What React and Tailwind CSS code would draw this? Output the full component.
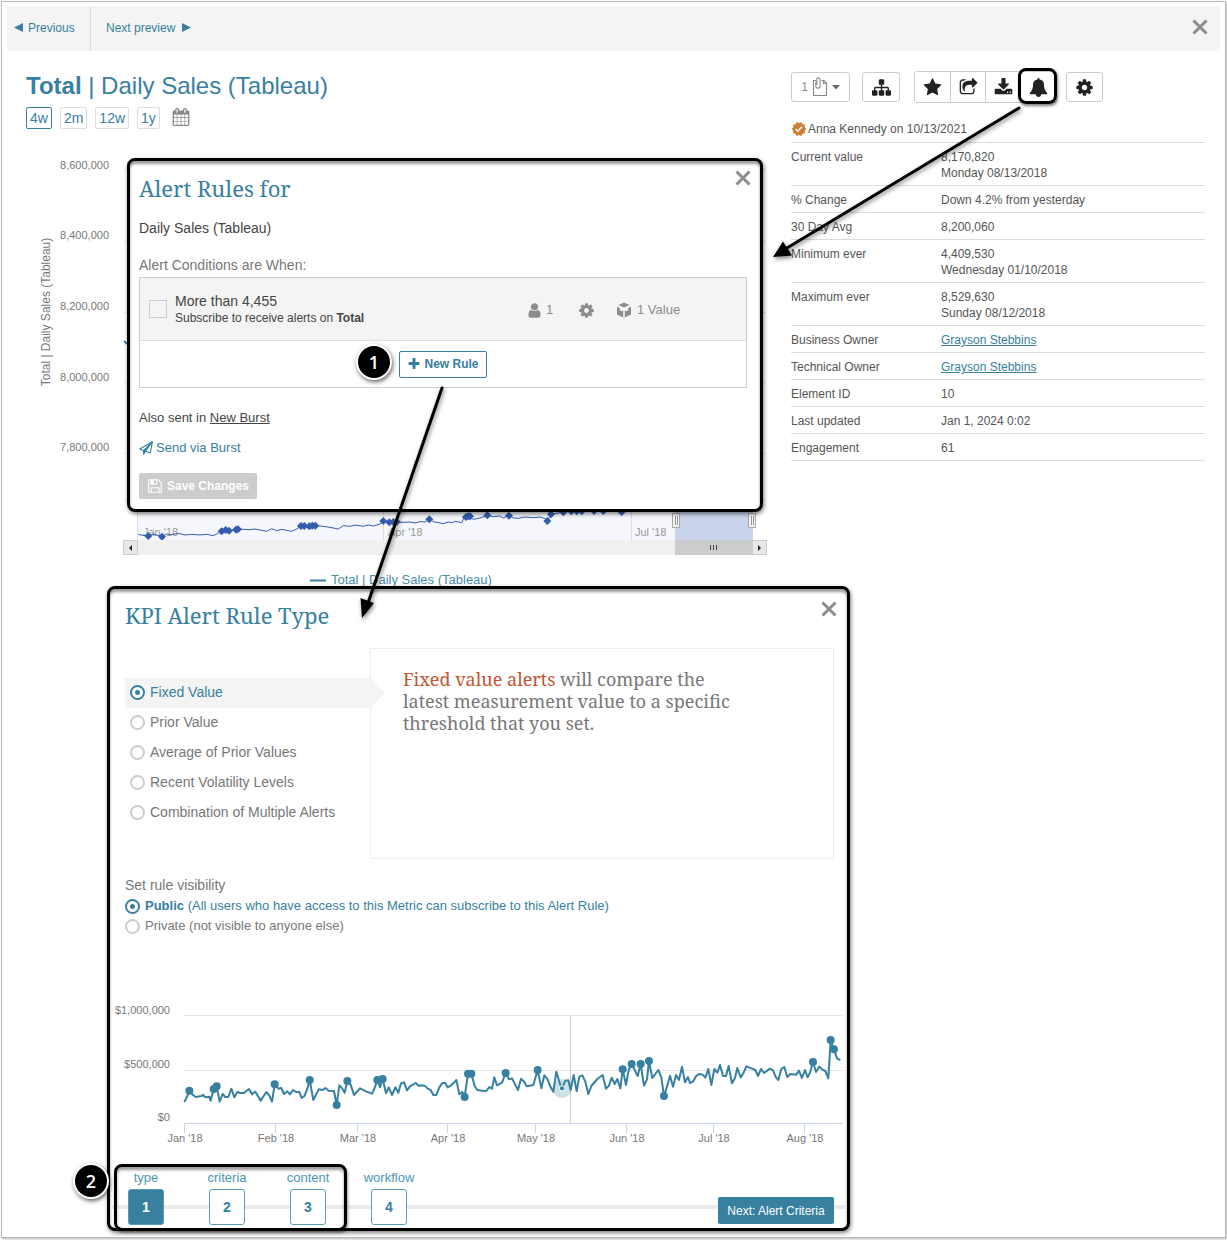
import { useState } from "react"
import { MdVerified } from "react-icons/md"

const SERIF = "font-['Noto_Serif','Droid_Serif','DejaVu_Serif',serif]"

const ICONS = {
    calendar: "M192 1664h288v-288h-288v288zm352 0h320v-288h-320v288zm-352-352h288v-320h-288v320zm352 0h320v-320h-320v320zm-352-384h288v-288h-288v288zm736 736h320v-288h-320v288zm-384-736h320v-288h-320v288zm768 736h288v-288h-288v288zm-384-352h320v-320h-320v320zm-352-864v-288q0-13-9.5-22.5t-22.5-9.5h-64q-13 0-22.5 9.5t-9.5 22.5v288q0 13 9.5 22.5t22.5 9.5h64q13 0 22.5-9.5t9.5-22.5zm736 864h288v-320h-288v320zm-384-384h320v-288h-320v288zm384 0h288v-288h-288v288zm32-480v-288q0-13-9.5-22.5t-22.5-9.5h-64q-13 0-22.5 9.5t-9.5 22.5v288q0 13 9.5 22.5t22.5 9.5h64q13 0 22.5-9.5t9.5-22.5zm384-64v1280q0 52-38 90t-90 38h-1408q-52 0-90-38t-38-90v-1280q0-52 38-90t90-38h128v-96q0-66 47-113t113-47h64q66 0 113 47t47 113v96h384v-96q0-66 47-113t113-47h64q66 0 113 47t47 113v96h128q52 0 90 38t38 90z",
    cog: "M1152 896q0-106-75-181t-181-75-181 75-75 181 75 181 181 75 181-75 75-181zm512-109v222q0 12-8 23t-20 13l-185 28q-19 54-39 91 35 50 107 138 10 12 10 25t-9 23q-27 37-99 108t-94 71q-12 0-26-9l-138-108q-44 23-91 38-16 136-29 186-7 28-36 28h-222q-14 0-24.5-8.5t-11.5-21.5l-28-184q-49-16-90-37l-141 107q-10 9-25 9-14 0-25-11-126-114-165-168-7-10-7-23 0-12 8-23 15-21 51-66.5t54-70.5q-27-50-41-99l-183-27q-13-2-21-12.5t-8-23.5v-222q0-12 8-23t19-13l186-28q14-46 39-92-40-57-107-138-10-12-10-24 0-10 9-23 26-36 98.5-107.5t94.5-71.5q13 0 26 10l138 107q44-23 91-38 16-136 29-186 7-28 36-28h222q14 0 24.5 8.5t11.5 21.5l28 184q49 16 90 37l142-107q9-9 24-9 13 0 25 10 129 119 165 170 7 8 7 22 0 12-8 23-15 21-51 66.5t-54 70.5q26 50 41 98l183 28q13 2 21 12.5t8 23.5z",
    star: "M1728 647q0 22-26 48l-363 354 86 500q1 7 1 20 0 21-10.5 35.5t-30.5 14.5q-19 0-40-12l-449-236-449 236q-22 12-40 12-21 0-31.5-14.5t-10.5-35.5q0-6 2-20l86-500-364-354q-25-27-25-48 0-37 56-46l502-73 225-455q19-41 49-41t49 41l225 455 502 73q56 9 56 46z",
    plus: "M1600 736v192q0 40-28 68t-68 28h-416v416q0 40-28 68t-68 28h-192q-40 0-68-28t-28-68v-416h-416q-40 0-68-28t-28-68v-192q0-40 28-68t68-28h416v-416q0-40 28-68t68-28h192q40 0 68 28t28 68v416h416q40 0 68 28t28 68z",
    save: "M512 1536h768v-384h-768v384zm896 0h128v-896q0-14-10-38.5t-20-34.5l-281-281q-10-10-34-20t-39-10v416q0 40-28 68t-68 28h-576q-40 0-68-28t-28-68v-416h-128v1280h128v-416q0-40 28-68t68-28h832q40 0 68 28t28 68v416zm-384-928v-320q0-13-9.5-22.5t-22.5-9.5h-192q-13 0-22.5 9.5t-9.5 22.5v320q0 13 9.5 22.5t22.5 9.5h192q13 0 22.5-9.5t9.5-22.5zm640 32v928q0 40-28 68t-68 28h-1344q-40 0-68-28t-28-68v-1344q0-40 28-68t68-28h928q40 0 88 20t76 48l280 280q28 28 48 76t20 88z",
    user: "M1536 1399q0 109-62.5 187t-150.5 78h-854q-88 0-150.5-78t-62.5-187q0-85 8.5-160.5t31.5-152 58.5-131 94-89 134.5-34.5q131 128 313 128t313-128q76 0 134.5 34.5t94 89 58.5 131 31.5 152 8.5 160.5zm-256-887q0 159-112.5 271.5t-271.5 112.5-271.5-112.5-112.5-271.5 112.5-271.5 271.5-112.5 271.5 112.5 112.5 271.5z",
    sitemap: "M1792 1248v320q0 40-28 68t-68 28h-320q-40 0-68-28t-28-68v-320q0-40 28-68t68-28h96v-192h-512v192h96q40 0 68 28t28 68v320q0 40-28 68t-68 28h-320q-40 0-68-28t-28-68v-320q0-40 28-68t68-28h96v-192h-512v192h96q40 0 68 28t28 68v320q0 40-28 68t-68 28h-320q-40 0-68-28t-28-68v-320q0-40 28-68t68-28h96v-192q0-52 38-90t90-38h512v-192h-96q-40 0-68-28t-28-68v-320q0-40 28-68t68-28h320q40 0 68 28t28 68v320q0 40-28 68t-68 28h-96v192h512q52 0 90 38t38 90v192h96q40 0 68 28t28 68z",
    share: "M1472 989v259q0 119-84.5 203.5t-203.5 84.5h-832q-119 0-203.5-84.5t-84.5-203.5v-832q0-119 84.5-203.5t203.5-84.5h255q13 0 22.5 9.5t9.5 22.5q0 27-26 32-77 26-133 60-10 4-16 4h-112q-66 0-113 47t-47 113v832q0 66 47 113t113 47h832q66 0 113-47t47-113v-214q0-19 18-29 28-13 54-37 16-16 35-8 21 9 21 29zm237-496l-384 384q-18 19-45 19-12 0-25-5-39-17-39-59v-192h-160q-323 0-438 131-119 137-74 473 3 23-20 34-8 2-12 2-16 0-26-13-10-14-21-31t-39.5-68.5-49.5-99.5-38.5-114-17.5-122q0-49 3.5-91t14-90 28-88 47-81.5 68.5-74 94.5-61.5 124.5-48.5 159.5-30.5 196.5-11h160v-192q0-42 39-59 13-5 25-5 26 0 45 19l384 384q19 19 19 45t-19 45z",
    download: "M1344 1344q0-26-19-45t-45-19-45 19-19 45 19 45 45 19 45-19 19-45zm256 0q0-26-19-45t-45-19-45 19-19 45 19 45 45 19 45-19 19-45zm128-224v320q0 40-28 68t-68 28h-1472q-40 0-68-28t-28-68v-320q0-40 28-68t68-28h465l135 136q58 56 136 56t136-56l136-136h464q40 0 68 28t28 68zm-325-569q17 41-14 70l-448 448q-18 19-45 19t-45-19l-448-448q-31-29-14-70 17-39 59-39h256v-448q0-26 19-45t45-19h256q26 0 45 19t19 45v448h256q42 0 59 39z",
    bell: "M1728 1408q0 52-38 90t-90 38h-448q0 106-75 181t-181 75-181-75-75-181h-448q-52 0-90-38t-38-90q50-42 91-88t85-119.5 74.5-158.5 50-206 19.5-260q0-152 117-282.5t307-158.5q-8-19-8-39 0-40 28-68t68-28 68 28 28 68q0 20-8 39 190 28 307 158.5t117 282.5q0 139 19.5 260t50 206 74.5 158.5 85 119.5 91 88z",
}

const Icon = ({ name, className }) => (
    <svg viewBox="0 0 1792 1792" fill="currentColor" aria-hidden="true" className={className}>
        <path d={ICONS[name]} />
    </svg>
)

const CubeIcon = () => (
    <svg viewBox="0 0 16 16" fill="currentColor" aria-hidden="true" className="size-4">
        <path d="M8 .5 13.5 3 8 5.600 2.500 3z" />
        <path d="M1 4.800 3.800 6v2.200L5.500 9.200 7.200 8.400v7.100L1 12.600z" />
        <path d="M15 4.800 12.200 6v2.200L10.500 9.200 8.800 8.400v7.100L15 12.600z" />
    </svg>
)

const PlaneIcon = () => (
    <svg viewBox="0 0 14 14" fill="none" stroke="currentColor" strokeWidth="1.1" strokeLinejoin="round" aria-hidden="true" className="size-[14px]">
        <path d="M.8 8 13.300.8 11.300 12 6.600 10.200 4.600 13V9.600z" />
        <path d="M13.300.8 4.600 9.600V13L6.400 10.200z" fill="currentColor" />
    </svg>
)

const CloseButton = ({ className }) => (
    <button type="button" aria-label="Close" className={`text-[#8c8c8c] ${className}`}>
        <svg viewBox="0 0 16 16" className="size-4" stroke="currentColor" strokeWidth="3">
            <path d="M1.5 1.5 14.5 14.5M14.5 1.5 1.5 14.5" />
        </svg>
    </button>
)

const StepBadge = ({ children, className }) => (
    <span
        className={`absolute z-40 flex size-[36px] items-center justify-center rounded-full border-2 border-white bg-black font-['Open_Sans','Noto_Sans',sans-serif] text-lg font-semibold text-white shadow-[1px_2px_4px_rgba(0,0,0,0.6)] ${className}`}
    >
        {children}
    </span>
)

const Radio = ({ name, value, checked, onChange, children, className }) => (
    <label className={`flex items-center gap-[5px] ${checked ? "text-[#37809f]" : "text-[#777]"} ${className}`}>
        <input
            type="radio"
            name={name}
            checked={checked}
            onChange={() => onChange(value)}
            className="size-[15px] shrink-0 appearance-none rounded-full border-2 border-[#ccc] bg-white checked:border-[#37809f] checked:bg-[radial-gradient(circle,#37809f_2px,white_3px)]"
        />
        <span>{children}</span>
    </label>
)

const details = [
    { label: "Current value", lines: ["8,170,820", "Monday 08/13/2018"] },
    { label: "% Change", lines: ["Down 4.2% from yesterday"] },
    { label: "30 Day Avg", lines: ["8,200,060"] },
    { label: "Minimum ever", lines: ["4,409,530", "Wednesday 01/10/2018"] },
    { label: "Maximum ever", lines: ["8,529,630", "Sunday 08/12/2018"] },
    { label: "Business Owner", lines: ["Grayson Stebbins"], link: true },
    { label: "Technical Owner", lines: ["Grayson Stebbins"], link: true },
    { label: "Element ID", lines: ["10"] },
    { label: "Last updated", lines: ["Jan 1, 2024 0:02"] },
    { label: "Engagement", lines: ["61"] },
]

const ruleTypes = [
    "Fixed Value",
    "Prior Value",
    "Average of Prior Values",
    "Recent Volatility Levels",
    "Combination of Multiple Alerts",
]

const steps = ["type", "criteria", "content", "workflow"]

const Toolbar = () => {
    const button = "flex h-[30px] items-center justify-center border-[#ccc] bg-white text-[#222]"

    return (
        <div className="flex items-center">
            <button type="button" className={`${button} w-[59px] gap-1 rounded-[3px] border text-xs text-[#888]`}>
                <span className="text-[#888]">1</span>
                <svg viewBox="0 0 16 20" className="h-5 w-4" fill="none" stroke="#888" strokeWidth="1.1">
                    <path d="M4 3.500H1.500v15h13V6L12 3.500H9.500M11.500 3.500v3h3" />
                    <path d="M3.800 5v4a2.100 2.100 0 0 0 4.200 0V2.500a1.600 1.600 0 0 0-3.200 0V8" />
                </svg>
                <svg viewBox="0 0 8 5" className="h-[5px] w-2" fill="#666">
                    <path d="M0 0h8L4 4.500z" />
                </svg>
            </button>
            <button type="button" aria-label="Lineage" className={`${button} ml-3 w-[38px] rounded-[3px] border`}>
                <Icon name="sitemap" className="size-[19px]" />
            </button>
            <div className="relative ml-[14px] flex rounded-[3px] border border-[#ccc]">
                <button type="button" aria-label="Favorite" className={`${button} h-[28px] w-[36px] border-r`}>
                    <Icon name="star" className="size-[19px]" />
                </button>
                <button type="button" aria-label="Share" className={`${button} h-[28px] w-[35px] border-r`}>
                    <Icon name="share" className="size-[19px]" />
                </button>
                <button type="button" aria-label="Download" className={`${button} h-[28px] w-[35px] border-r`}>
                    <Icon name="download" className="size-[19px]" />
                </button>
                <button type="button" aria-label="Alerts" className={`${button} h-[28px] w-[35px]`}>
                    <Icon name="bell" className="size-[19px]" />
                </button>
                <span className="absolute -top-[4px] -right-[1px] h-[36px] w-[39px] rounded-lg border-3 border-black shadow-[1px_2px_3px_rgba(0,0,0,0.5)]" />
            </div>
            <button type="button" aria-label="Settings" className={`${button} ml-[9px] w-[37px] rounded-[3px] border`}>
                <Icon name="cog" className="size-[19px]" />
            </button>
        </div>
    )
}

const DetailsPanel = () => (
    <aside className="w-[414px] shrink-0 pt-[20px] text-xs leading-4 text-[#555]">
        <Toolbar />
        <div className="mt-4 flex h-6 items-center gap-px border-b border-[#ddd] pb-1">
            <MdVerified className="size-4 text-[#cc7f35]" />
            <span>Anna Kennedy on 10/13/2021</span>
        </div>
        <table className="w-full text-left">
            <tbody>
                {details.map((row) => (
                    <tr key={row.label} className="border-b border-[#ddd] align-top">
                        <th scope="row" className="w-[150px] pt-[6px] pb-1 font-normal">{row.label}</th>
                        <td className="pt-[6px] pb-1">
                            {row.lines.map((line) =>
                                row.link ? (
                                    <a key={line} href="#" className="text-[#37809f] underline">{line}</a>
                                ) : (
                                    <div key={line}>{line}</div>
                                )
                            )}
                        </td>
                    </tr>
                ))}
            </tbody>
        </table>
    </aside>
)

const NAV_LINE =
    "115,433 128,436 145,438 160,432 186,440 200,432 215,434 235,430 255,435 275,433 300,435 320,433 340,437 352,431 365,424 377,420 390,422 412,418 430,418 450,419 465,417 480,420 500,424 515,416 530,422 545,418 560,421 575,424 590,417 603,408 613,409 628,409 640,406 650,407 670,409 690,412 715,417 730,407 750,409 765,405 790,409 805,405 820,408 840,402 850,393 870,397 890,396 910,397 930,396 945,399 960,395 975,396 988,388 1000,395 1015,398 1030,401 1045,396 1055,398 1066,394 1085,398 1093,381 1103,379 1120,388 1140,384 1162,376 1180,380 1200,378 1210,384 1227,375 1240,384 1255,385 1275,381 1300,383 1320,381 1335,386 1342,393 1353,373 1370,370 1390,366 1420,362 1440,364 1480,360 1510,362 1540,360 1565,364 1590,360"
const NAV_MARKERS = [
    [145, 438], [186, 440], [365, 424], [377, 420], [387, 422], [408, 419], [414, 418], [603, 408], [613, 408], [628, 409],
    [637, 407], [646, 407], [850, 393], [868, 397], [880, 396], [890, 395], [988, 388], [1098, 381], [1104, 379], [1110, 379],
    [1162, 376], [1227, 377], [1342, 393], [1353, 373], [1390, 367], [1414, 364], [1430, 364], [1445, 364], [1482, 363], [1510, 363], [1565, 366],
]

const MetricChart = () => (
    <svg width="744" height="457" role="img" aria-label="Daily sales chart" className="block font-['Liberation_Sans',Arial,sans-serif]">
        <g fontSize="11" fill="#777" textAnchor="end">
            <text x="83" y="40">8,600,000</text>
            <text x="83" y="110">8,400,000</text>
            <text x="83" y="181">8,200,000</text>
            <text x="83" y="252">8,000,000</text>
            <text x="83" y="322">7,800,000</text>
        </g>
        <text fontSize="12" fill="#777" textAnchor="middle" transform="translate(24 183) rotate(-90)">
            Total | Daily Sales (Tableau)
        </text>
        <path d="M99 40.500h641M99 112.500h641M99 183.500h641M99 253.500h641M99 324.500h641M99 371.500h641" stroke="#e3e3e3" />
        <path d="M98 212l3 3" stroke="#37809f" strokeWidth="2" />

        {/* Navigator */}
        <rect x="112" y="371" width="615" height="40" fill="#f5f7fc" />
        <path d="M111.500 371v40M357.500 371v40M605.500 371v40" stroke="#ddd" />
        <rect x="649" y="371" width="78" height="40" fill="#c9d3eb" />
        <g fontSize="11" fill="#999">
            <text x="117" y="407">Jan '18</text>
            <text x="362" y="407">Apr '18</text>
            <text x="609" y="407">Jul '18</text>
        </g>
        <g transform="translate(74 261) scale(0.33333)">
            <polyline points={NAV_LINE} fill="none" stroke="#335cad" strokeWidth="3" />
            {NAV_MARKERS.map(([x, y]) => (
                <path key={`${x}-${y}`} d={`M${x} ${y - 12}l12 12-12 12-12-12z`} fill="#335cad" />
            ))}
        </g>
        <g fill="#f2f2f2" stroke="#aaa">
            <rect x="646.500" y="384.500" width="7" height="14" />
            <rect x="722.500" y="384.500" width="7" height="14" />
        </g>
        <path d="M649.500 387v9M651.500 387v9M725.500 387v9M727.500 387v9" stroke="#999" />

        {/* Scrollbar */}
        <rect x="98" y="411" width="642" height="15" fill="#f0f0f0" />
        <rect x="649" y="411" width="78" height="15" fill="#ccc" />
        <g fill="#e8e8e8" stroke="#ccc">
            <rect x="97.500" y="411.500" width="14" height="14" />
            <rect x="726.500" y="411.500" width="14" height="14" />
        </g>
        <path d="M106 416v6l-3-3zM732 416v6l3-3z" fill="#222" />
        <path d="M684.500 416v5M687.500 416v5M690.500 416v5" stroke="#444" />

        <path d="M284 451.500h16" stroke="#37809f" strokeWidth="2" />
        <text x="305" y="455" fontSize="13" fill="#4a8ca8">Total | Daily Sales (Tableau)</text>
    </svg>
)

const AlertRulesDialog = () => (
    <section className="absolute top-[29px] left-[101px] z-10 w-[636px] rounded-lg border-3 border-black bg-white pt-3 pr-[13px] pb-[10px] pl-[9px] shadow-[1px_2px_4px_rgba(0,0,0,0.5),inset_0_3px_3px_rgba(0,0,0,0.4)]">
        <CloseButton className="absolute top-[9px] right-[9px]" />
        <h2 className={`${SERIF} text-[22px] leading-[30px] text-[#37809f]`}>Alert Rules for</h2>
        <p className="mt-[15px] text-sm leading-5 text-[#444]">Daily Sales (Tableau)</p>
        <p className="mt-[17px] text-sm leading-5 text-[#777]">Alert Conditions are When:</p>
        <div className="mt-0.5 border border-[#ccc]">
            <div className="flex h-[63px] items-center border-b border-[#ddd] bg-[#f4f4f4] pl-[9px] text-[#8c8c8c]">
                <label className="flex flex-1 items-center gap-2 text-[#444]">
                    <input type="checkbox" className="size-[18px] appearance-none border border-[#ccc] bg-[#f4f4f4]" />
                    <span className="pb-px">
                        <span className="block text-sm leading-[18px]">More than 4,455</span>
                        <span className="block text-xs leading-4">
                            Subscribe to receive alerts on <b>Total</b>
                        </span>
                    </span>
                </label>
                <div className="flex w-[220px] items-center pt-0.5 text-[13px]">
                    <Icon name="user" className="size-[17px]" />
                    <span className="ml-[3px] w-8">1</span>
                    <Icon name="cog" className="size-[17px]" />
                    <span className="ml-[21px] flex items-center gap-[5px]">
                        <CubeIcon />
                        1 Value
                    </span>
                </div>
            </div>
            <div className="flex h-[46px] items-center justify-center">
                <div className="relative">
                    <StepBadge className="-top-[7px] -left-[43px]">1</StepBadge>
                    <button
                        type="button"
                        className="flex h-[27px] w-[88px] items-center justify-center gap-[3px] rounded-[2px] border border-[#37809f] text-xs font-bold text-[#37809f]"
                    >
                        <Icon name="plus" className="size-[14px]" />
                        New Rule
                    </button>
                </div>
            </div>
        </div>
        <p className="mt-5 text-[13px] leading-5 text-[#444]">
            Also sent in <a href="#" className="underline">New Burst</a>
        </p>
        <a href="#" className="mt-[10px] flex items-center gap-[3px] text-[13px] leading-5 text-[#37809f]">
            <PlaneIcon />
            Send via Burst
        </a>
        <button
            type="button"
            className="mt-[15px] flex h-[26px] w-[118px] items-center justify-center gap-1 rounded-[2px] bg-[#ccc] text-xs font-bold text-white"
        >
            <Icon name="save" className="size-4" />
            Save Changes
        </button>
    </section>
)

const TREND_LINE =
    "253,336 262,318 268,302 280,316 288,321 304,318 310,315 316,322 328,320 332,332 341,297 350,289 359,335 368,312 376,321 385,321 394,296 403,322 412,306 420,309 432,309 438,304 447,297 456,313 466,305 482,332 499,306 508,317 516,335 524,283 535,296 544,294 552,312 562,304 570,313 579,300 588,306 598,306 605,324 614,317 622,296 629,270 640,330 656,298 668,300 676,294 686,302 702,303 710,345 718,286 727,296 734,308 742,273 752,284 762,315 780,295 798,304 816,311 824,294 832,270 840,292 848,267 858,310 866,292 876,315 886,292 895,308 903,280 912,277 921,301 930,289 947,279 957,288 964,286 974,287 983,296 992,300 1000,315 1009,315 1018,292 1026,280 1035,278 1043,292 1053,286 1062,278 1069,270 1078,313 1087,306 1094,321 1104,251 1114,251 1124,288 1132,300 1150,303 1160,302 1168,291 1176,296 1183,262 1191,286 1206,278 1217,249 1227,268 1236,265 1254,300 1263,266 1273,276 1280,289 1300,285 1313,240 1324,295 1333,256 1343,268 1350,288 1360,305 1369,245 1380,282 1386,295 1396,272 1405,271 1412,300 1421,255 1430,304 1438,260 1447,256 1456,275 1465,312 1474,288 1492,267 1508,255 1518,296 1527,287 1535,263 1544,282 1552,267 1561,295 1568,238 1578,285 1586,240 1595,222 1613,258 1622,222 1632,287 1641,268 1647,213 1657,264 1666,252 1675,240 1684,262 1692,318 1701,290 1710,257 1719,290 1728,255 1737,270 1746,230 1755,277 1764,261 1770,279 1780,274 1788,259 1797,252 1808,254 1816,263 1825,237 1834,285 1843,237 1852,248 1860,225 1869,258 1878,258 1886,228 1896,280 1905,264 1912,234 1922,262 1930,250 1939,229 1956,236 1966,240 1974,258 1983,237 1992,249 2010,236 2019,241 2028,262 2035,270 2044,237 2053,231 2062,261 2071,252 2089,254 2097,242 2106,264 2115,240 2123,262 2130,248 2139,216 2148,246 2158,230 2166,238 2176,243 2185,265 2192,150 2202,178 2211,205 2221,210"
const TREND_MARKERS = [
    [268, 302], [341, 297], [350, 289], [524, 283], [629, 270], [710, 345], [742, 273], [832, 270], [848, 267], [1094, 321],
    [1104, 251], [1114, 251], [1217, 249], [1313, 240], [1568, 238], [1595, 222], [1622, 222], [1647, 213], [1692, 318],
    [2139, 216], [2192, 150], [2202, 178],
]
const MONTHS = [
    ["Jan '18", 74], ["Feb '18", 165], ["Mar '18", 247], ["Apr '18", 337], ["May '18", 425], ["Jun '18", 516], ["Jul '18", 603], ["Aug '18", 694],
]

const TrendChart = () => (
    <svg width="737" height="150" role="img" aria-label="Sales by month" className="block font-['Liberation_Sans',Arial,sans-serif]">
        <g fontSize="11" fill="#777" textAnchor="end">
            <text x="60" y="14">$1,000,000</text>
            <text x="60" y="68">$500,000</text>
            <text x="60" y="121">$0</text>
        </g>
        <path d="M74 15.500h659M74 70.500h659" stroke="#e6e6e6" />
        <path d="M460.500 16v107" stroke="#ccc" />
        <path d="M74 123.500h659" stroke="#ccd6eb" />
        {MONTHS.map(([label, x]) => (
            <g key={label}>
                <path d={`M${x + 0.5} 124v9`} stroke="#ccd6eb" />
                <text x={x + 1} y="142" fontSize="11" fill="#777" textAnchor="middle">{label}</text>
            </g>
        ))}
        <g transform="translate(-10 -10) scale(0.33333)">
            <circle cx="1386" cy="295" r="29" fill="#37809f" fillOpacity="0.25" />
            <polyline points={TREND_LINE} fill="none" stroke="#37809f" strokeWidth="6" strokeLinejoin="round" />
            {TREND_MARKERS.map(([x, y]) => (
                <circle key={`${x}-${y}`} cx={x} cy={y} r="12" fill="#37809f" />
            ))}
            <circle cx="1386" cy="295" r="8" fill="#37809f" stroke="#fff" strokeWidth="3" />
        </g>
    </svg>
)

const RuleTypeDialog = () => {
    const [ruleType, setRuleType] = useState("Fixed Value")
    const [visibility, setVisibility] = useState("public")

    return (
        <section className="relative z-20 ml-[100px] w-[743px] rounded-lg border-3 border-black bg-white pt-[11px] shadow-[1px_2px_4px_rgba(0,0,0,0.5),inset_0_3px_3px_rgba(0,0,0,0.4)]">
            <CloseButton className="absolute top-3 right-[10px]" />
            <h2 className={`${SERIF} pl-[15px] text-[22px] leading-[30px] text-[#37809f]`}>KPI Alert Rule Type</h2>

            <div className="mt-[18px] flex pr-[13px] pl-[15px]">
                <div className="w-[245px] shrink-0 pt-[30px]">
                    {ruleTypes.map((type) => (
                        <div key={type} className={`relative ${type === ruleType ? "bg-[#f4f4f4]" : ""}`}>
                            <Radio
                                name="rule-type"
                                value={type}
                                checked={type === ruleType}
                                onChange={setRuleType}
                                className="h-[30px] pb-0.5 pl-[5px] text-sm"
                            >
                                {type}
                            </Radio>
                            {type === ruleType && (
                                <svg viewBox="0 0 16 30" className="absolute top-0 left-full h-[30px] w-4" fill="#f4f4f4">
                                    <path d="M0 0h1l14 15L1 30H0z" />
                                </svg>
                            )}
                        </div>
                    ))}
                </div>
                <div className={`${SERIF} h-[211px] flex-1 border border-[#eee] pt-[19px] pl-8 text-lg leading-[22px] text-[#777]`}>
                    <p className="w-[340px]">
                        <span className="inline-block text-[#c4532f]">Fixed value alerts</span> will compare the latest measurement value to a specific
                        threshold that you set.
                    </p>
                </div>
            </div>

            <fieldset className="mt-4 pl-[15px] text-[13px]">
                <legend className="pb-px text-sm leading-5 text-[#777]">Set rule visibility</legend>
                <Radio name="visibility" value="public" checked={visibility === "public"} onChange={setVisibility} className="h-5">
                    <b>Public</b> (All users who have access to this Metric can subscribe to this Alert Rule)
                </Radio>
                <Radio name="visibility" value="private" checked={visibility === "private"} onChange={setVisibility} className="h-5">
                    Private (not visible to anyone else)
                </Radio>
            </fieldset>

            <div className="mt-16">
                <TrendChart />
            </div>

            {/* Wizard steps */}
            <div className="relative mt-[14px] flex items-end justify-between pr-[13px] pb-[3px] pl-[18px]">
                <span className="absolute inset-x-0 bottom-[19px] h-1 bg-[#ebebeb]" />
                <ol className="relative flex gap-[45px] pt-[5px]">
                    {steps.map((step, index) => (
                        <li key={step} className="flex w-9 flex-col items-center gap-0.5 text-[13px] leading-[18px] text-[#4a96b5]">
                            {step}
                            <button
                                type="button"
                                aria-label={`Step ${index + 1}: ${step}`}
                                className={`size-9 rounded-[3px] border border-[#5a9cb8] text-sm font-bold ${index === 0 ? "bg-[#37809f] text-white" : "bg-white text-[#37809f]"}`}
                            >
                                {index + 1}
                            </button>
                        </li>
                    ))}
                </ol>
                <button type="button" className="relative mb-px h-[27px] w-[116px] rounded-[2px] bg-[#37809f] text-xs text-white">
                    Next: Alert Criteria
                </button>
                <span className="absolute top-0 -bottom-[3px] left-1 w-[233px] rounded-lg border-3 border-black shadow-[1px_2px_3px_rgba(0,0,0,0.4),inset_0_3px_3px_rgba(0,0,0,0.4)]" />
                <StepBadge className="-top-px -left-[37px]">2</StepBadge>
            </div>
        </section>
    )
}

export default function App() {
    return (
        <div className="bg-white p-px pb-0.5 font-['Liberation_Sans',Arial,sans-serif]">
            <div className="border border-[#bbb] px-[5px] pt-1 pb-[6px] shadow-[1px_1px_2px_rgba(0,0,0,0.3)]">
                <header className="flex h-[45px] items-center bg-[#f4f4f4] text-xs text-[#37809f]">
                    <a href="#" className="flex h-full w-[84px] items-center gap-[5px] border-r border-[#ddd] pb-0.5 pl-[7px]">
                        <svg viewBox="0 0 9 9" className="size-[9px]" fill="currentColor">
                            <path d="M9 0v9L0 4.500z" />
                        </svg>
                        Previous
                    </a>
                    <a href="#" className="flex h-full items-center gap-[7px] pb-0.5 pl-[15px]">
                        Next preview
                        <svg viewBox="0 0 9 9" className="size-[9px]" fill="currentColor">
                            <path d="M0 0v9l9-4.500z" />
                        </svg>
                    </a>
                    <CloseButton className="mr-3 ml-auto pb-[3px]" />
                </header>

                <main className="relative">
                    <div className="flex justify-between pr-[15px] pl-[19px]">
                        <div className="min-w-0 pt-[19px]">
                            <h1 className="text-2xl leading-8 text-[#37809f]">
                                <b>Total</b> | Daily Sales (Tableau)
                            </h1>
                            <div className="mt-[5px] flex items-center gap-2 text-sm text-[#37809f]">
                                <button type="button" className="h-[22px] rounded-[2px] border border-[#37809f] px-[3px] leading-5">4w</button>
                                <button type="button" className="h-[22px] rounded-[2px] border border-[#ddd] px-[3px] leading-5">2m</button>
                                <button type="button" className="h-[22px] rounded-[2px] border border-[#ddd] px-[3px] leading-5">12w</button>
                                <button type="button" className="h-[22px] rounded-[2px] border border-[#ddd] px-[3px] leading-5">1y</button>
                                <button type="button" aria-label="Pick dates" className="ml-1 pb-0.5 text-[#888]">
                                    <Icon name="calendar" className="size-[18px]" />
                                </button>
                            </div>
                            <div className="relative">
                                <MetricChart />
                                <AlertRulesDialog />
                            </div>
                        </div>
                        <DetailsPanel />
                    </div>
                    <RuleTypeDialog />

                    {/* Callout arrows */}
                    <svg
                        width="252"
                        height="160"
                        aria-hidden="true"
                        className="pointer-events-none absolute top-[53px] right-[199px] z-30 drop-shadow-[1px_2px_2px_rgba(0,0,0,0.5)]"
                    >
                        <path d="M250 4 18 144" stroke="#000" strokeWidth="3" strokeLinecap="round" />
                        <path d="M4 153 14 137.500 23 151.500z" />
                    </svg>
                    <svg
                        width="90"
                        height="240"
                        aria-hidden="true"
                        className="pointer-events-none absolute top-[333px] left-[349px] z-30 drop-shadow-[1px_2px_2px_rgba(0,0,0,0.5)]"
                    >
                        <path d="M86 4 11 222" stroke="#000" strokeWidth="3" strokeLinecap="round" />
                        <path d="M6 234 4.500 214 18 219z" />
                    </svg>
                </main>
            </div>
        </div>
    )
}
